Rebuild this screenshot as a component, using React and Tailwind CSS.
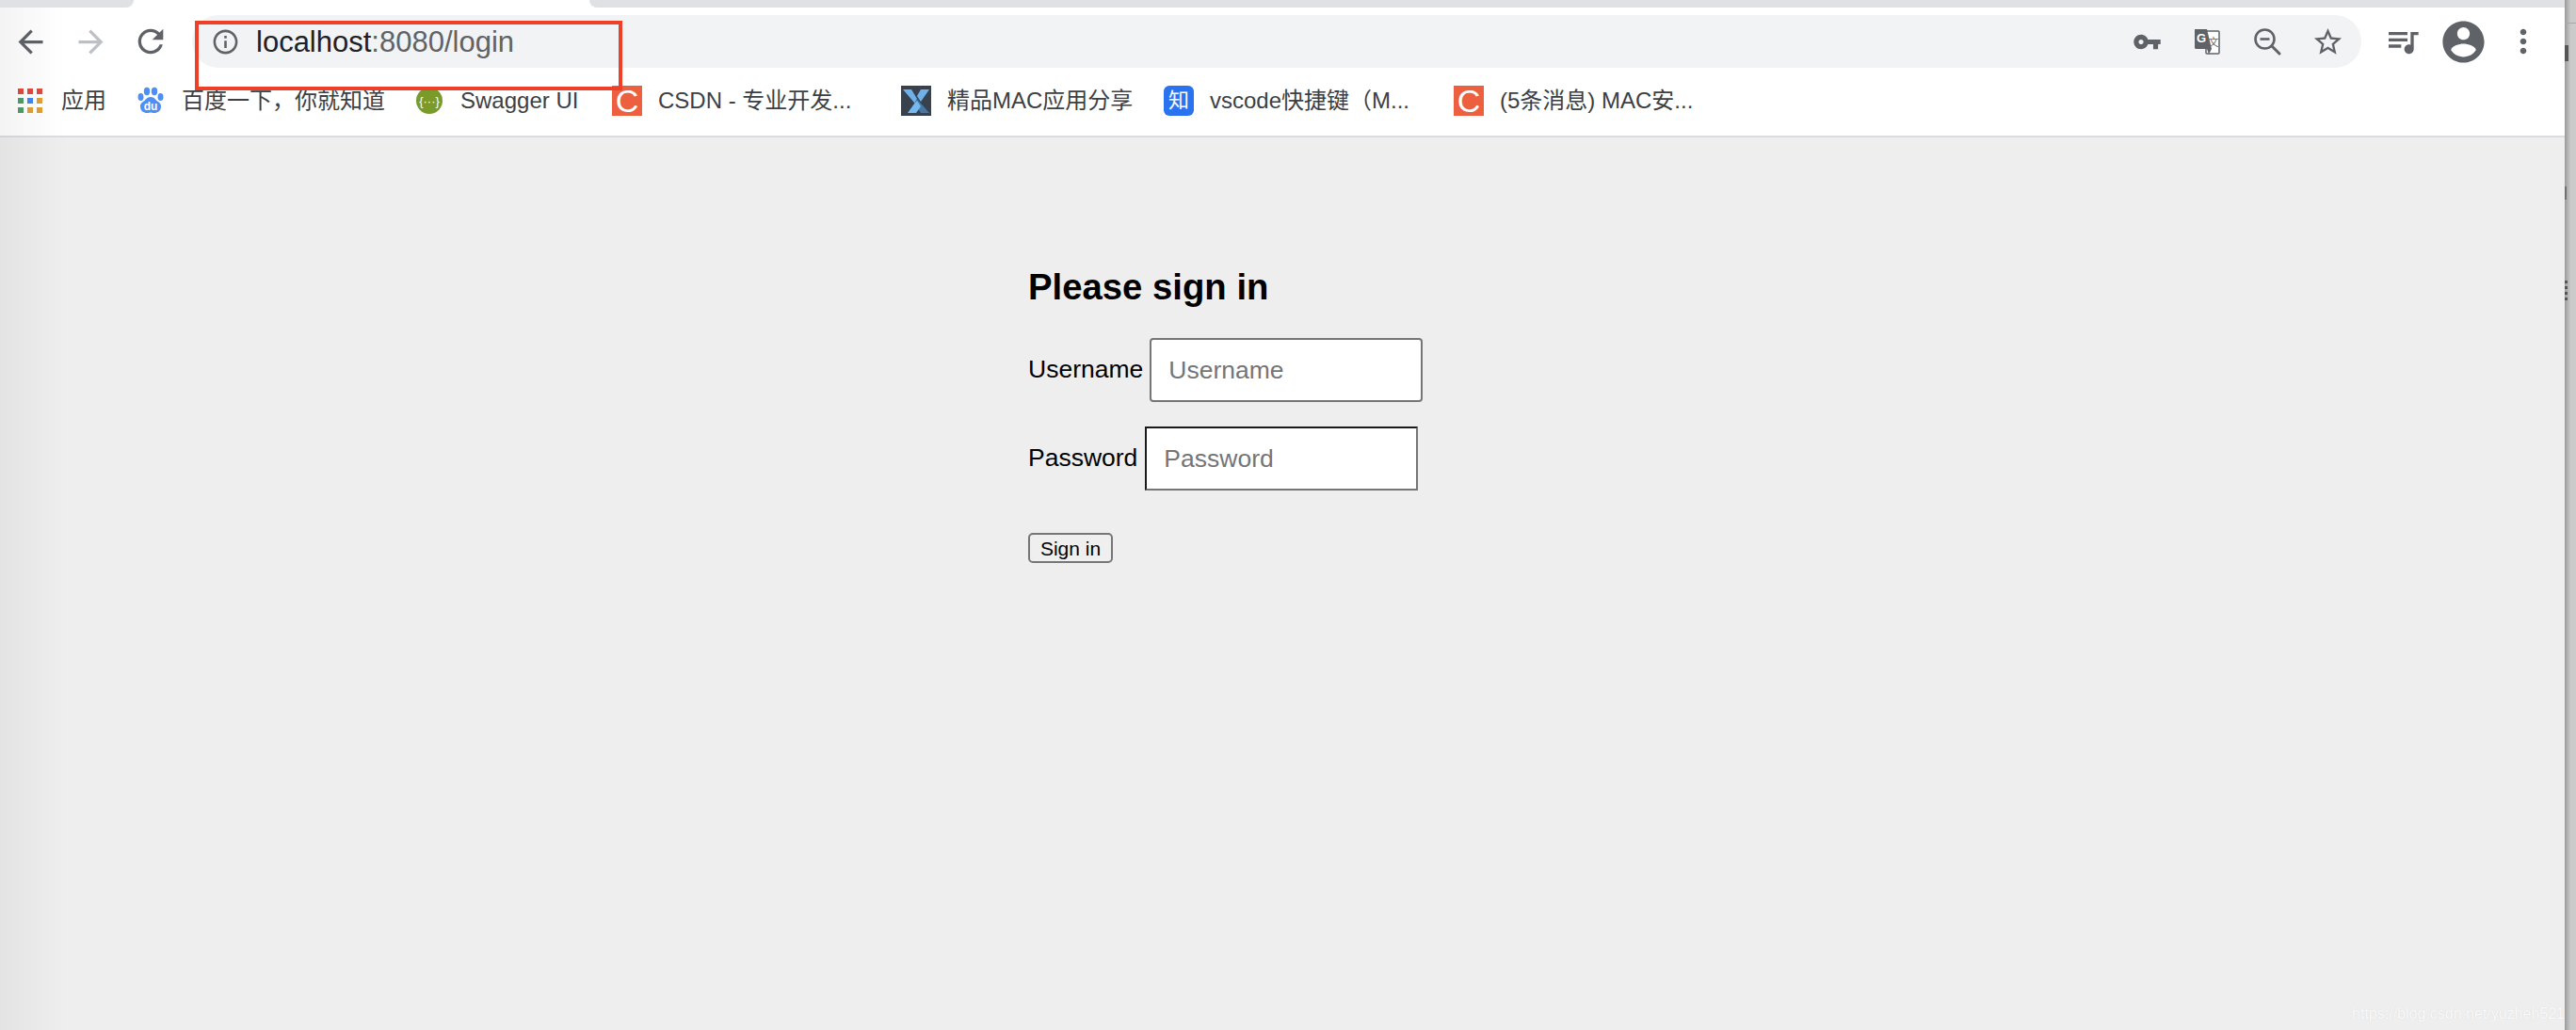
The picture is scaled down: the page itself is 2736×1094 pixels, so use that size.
import React from 'react';

const uiFont = { fontFamily: '"Liberation Sans", "Noto Sans CJK SC", sans-serif' };

function Mat({ d, size, className }) {
  return (
    <svg width={size} height={size} viewBox="0 0 24 24" fill="currentColor" className={className}>
      <path d={d} />
    </svg>
  );
}

const paths = {
  back: 'M20 11H7.83l5.59-5.59L12 4l-8 8 8 8 1.41-1.41L7.83 13H20v-2z',
  forward: 'M12 4l-1.41 1.41L16.17 11H4v2h12.17l-5.58 5.59L12 20l8-8z',
  reload: 'M17.65 6.35C16.2 4.9 14.21 4 12 4c-4.42 0-7.99 3.58-7.99 8s3.57 8 7.99 8c3.73 0 6.84-2.55 7.73-6h-2.08c-.82 2.33-3.04 4-5.65 4-3.31 0-6-2.69-6-6s2.69-6 6-6c1.66 0 3.14.69 4.22 1.78L13 11h7V4l-2.35 2.35z',
  info: 'M11 7h2v2h-2zm0 4h2v6h-2zm1-9C6.48 2 2 6.48 2 12s4.48 10 10 10 10-4.48 10-10S17.52 2 12 2zm0 18c-4.41 0-8-3.59-8-8s3.59-8 8-8 8 3.59 8 8-3.59 8-8 8z',
  key: 'M12.65 10C11.83 7.67 9.61 6 7 6c-3.31 0-6 2.69-6 6s2.69 6 6 6c2.61 0 4.83-1.67 5.65-4H17v4h4v-4h2v-4H12.65zM7 14c-1.1 0-2-.9-2-2s.9-2 2-2 2 .9 2 2-.9 2-2 2z',
  star: 'M22 9.24l-7.19-.62L12 2 9.19 8.63 2 9.24l5.46 4.73L5.82 21 12 17.27 18.18 21l-1.63-7.03L22 9.24zM12 15.4l-3.76 2.27 1-4.28-3.32-2.88 4.38-.38L12 6.1l1.71 4.04 4.38.38-3.32 2.88 1 4.28L12 15.4z',
  queue: 'M15 6H3v2h12V6zm0 4H3v2h12v-2zM3 16h8v-2H3v2zM17 6v8.18c-.31-.11-.65-.18-1-.18-1.66 0-3 1.34-3 3s1.34 3 3 3 3-1.34 3-3V8h3V6h-5z',
  account: 'M12 2C6.48 2 2 6.48 2 12s4.48 10 10 10 10-4.48 10-10S17.52 2 12 2zm0 3c1.66 0 3 1.34 3 3s-1.34 3-3 3-3-1.34-3-3 1.34-3 3-3zm0 14.2c-2.5 0-4.71-1.28-6-3.22.03-1.99 4-3.08 6-3.08 1.99 0 5.97 1.09 6 3.08-1.29 1.94-3.5 3.22-6 3.22z',
  more: 'M12 8c1.1 0 2-.9 2-2s-.9-2-2-2-2 .9-2 2 .9 2 2 2zm0 2c-1.1 0-2 .9-2 2s.9 2 2 2 2-.9 2-2-.9-2-2-2zm0 6c-1.1 0-2 .9-2 2s.9 2 2 2 2-.9 2-2-.9-2-2-2z',
};

function AppsIcon() {
  const colors = ['#e04a3f', '#e04a3f', '#e04a3f', '#4f9d69', '#4285f4', '#e2a031', '#4f9d69', '#e2a031', '#e2a031'];
  return (
    <svg width="32" height="32" viewBox="0 0 32 32">
      {colors.map((c, i) => (
        <rect key={i} x={3 + (i % 3) * 10} y={3 + Math.floor(i / 3) * 10} width="6" height="6" fill={c} />
      ))}
    </svg>
  );
}

function BaiduIcon() {
  return (
    <svg width="32" height="32" viewBox="0 0 32 32">
      <g fill="#4e8ef7">
        <ellipse cx="5.5" cy="12" rx="3" ry="4" />
        <ellipse cx="12" cy="6" rx="3.2" ry="4.2" />
        <ellipse cx="20" cy="6" rx="3.2" ry="4.2" />
        <ellipse cx="26.5" cy="12" rx="3" ry="4" />
        <path d="M16 12c4 0 5 3 8 5 3 2 3 4 3 5 0 5-4 7-7 7-2 0-3-.5-4-.5s-2 .5-4 .5c-3 0-7-2-7-7 0-1 0-3 3-5 3-2 4-5 8-5z" />
      </g>
      <text x="16" y="26" textAnchor="middle" fontSize="12" fontWeight="700" fill="#fff" style={uiFont}>du</text>
    </svg>
  );
}

function SwaggerIcon() {
  return (
    <svg width="32" height="32" viewBox="0 0 32 32">
      <circle cx="16" cy="16" r="14" fill="#7a9a2a" />
      <text x="16" y="20.5" textAnchor="middle" fontSize="13" fill="#fff" style={uiFont}>{'{···}'}</text>
    </svg>
  );
}

function CsdnIcon() {
  return (
    <div className="w-8 h-8 bg-[#ec6040] flex items-center justify-center text-white text-[34px] leading-none">C</div>
  );
}

function XIcon() {
  return (
    <svg width="32" height="32" viewBox="0 0 32 32">
      <rect width="32" height="32" fill="#38424f" />
      <path d="M2 4h9l6 10-2.5 4.5z" fill="#6fb2ea" />
      <path d="M30 4h-9l-4 7 4 6z" fill="#6fb2ea" />
      <path d="M14.5 18.5 17 14l13 15h-9z" fill="#4579a3" />
      <path d="M14.5 18.5 7 29h9l5-7-4-6z" fill="#74b9f0" />
    </svg>
  );
}

function ZhiIcon() {
  return (
    <div className="w-8 h-8 rounded-md bg-[#2a73f0] flex items-center justify-center text-white text-[22px] leading-none">知</div>
  );
}

function TranslateIcon() {
  return (
    <svg width="32" height="32" viewBox="0 0 32 32">
      <rect x="15" y="5" width="14" height="24" rx="1" fill="#fff" stroke="#5f6368" strokeWidth="1.5" />
      <path d="M3 3h13l5 21H4.5A1.5 1.5 0 0 1 3 22.5z" fill="#5f6368" />
      <path d="M16 24h5l-3 5.5z" fill="#5f6368" />
      <text x="10" y="17" textAnchor="middle" fontSize="13" fontWeight="700" fill="#fff" style={uiFont}>G</text>
      <text x="23" y="21" textAnchor="middle" fontSize="11" fill="#5f6368" style={uiFont}>文</text>
    </svg>
  );
}

function ZoomOutIcon() {
  return (
    <svg width="32" height="32" viewBox="0 0 32 32" fill="none" stroke="#5f6368" strokeWidth="2.6">
      <circle cx="13.5" cy="13.5" r="10" />
      <path d="M8.5 13.5h10" />
      <path d="M21 21l8 8" strokeLinecap="round" strokeWidth="3" />
    </svg>
  );
}

const bookmarks = [
  { icon: <AppsIcon />, label: '应用', width: 'w-[128px]' },
  { icon: <BaiduIcon />, label: '百度一下，你就知道', width: 'w-[296px]' },
  { icon: <SwaggerIcon />, label: 'Swagger UI', width: 'w-[210px]' },
  { icon: <CsdnIcon />, label: 'CSDN - 专业开发...', width: 'w-[307px]' },
  { icon: <XIcon />, label: '精品MAC应用分享', width: 'w-[279px]' },
  { icon: <ZhiIcon />, label: 'vscode快捷键（M...', width: 'w-[308px]' },
  { icon: <CsdnIcon />, label: '(5条消息) MAC安...', width: 'w-[300px]' },
];

function Toolbar() {
  return (
    <div className="flex h-[72px] py-2 pr-3 items-stretch text-[#5f6368]">
      <div className="w-16 flex items-center justify-center"><Mat d={paths.back} size={39} /></div>
      <div className="w-16 flex items-center justify-center text-[#bdc1c6]"><Mat d={paths.forward} size={39} /></div>
      <div className="w-16 flex items-center justify-center"><Mat d={paths.reload} size={40} /></div>
      <div className="ml-3 flex-1 flex items-center bg-[#f1f3f4] rounded-full pl-[20px] pr-1">
        <Mat d={paths.info} size={31} />
        <span className="ml-[17px] text-[31px] text-[#5f6368] leading-none">
          <span className="text-[#202124]">localhost</span>:8080/login
        </span>
        <div className="ml-auto flex items-center">
          <div className="w-16 flex justify-center"><Mat d={paths.key} size={31} /></div>
          <div className="w-16 flex justify-center"><TranslateIcon /></div>
          <div className="w-16 flex justify-center"><ZoomOutIcon /></div>
          <div className="w-16 flex justify-center"><Mat d={paths.star} size={35} /></div>
        </div>
      </div>
      <div className="ml-3 flex items-center">
        <div className="w-16 flex justify-center"><Mat d={paths.queue} size={40} /></div>
        <div className="w-16 flex justify-center"><Mat d={paths.account} size={53} /></div>
        <div className="w-16 flex justify-center"><Mat d={paths.more} size={40} /></div>
      </div>
    </div>
  );
}

function BookmarkBar() {
  return (
    <div className="flex h-[66px] pb-[10px] items-center border-b-2 border-[#dadce0] text-[24px] text-[#3c4043]">
      {bookmarks.map((b, i) => (
        <div key={i} className={`flex items-center gap-[17px] pl-4 shrink-0 ${b.width}`}>
          <div className="shrink-0">{b.icon}</div>
          <span className="whitespace-nowrap leading-none">{b.label}</span>
        </div>
      ))}
    </div>
  );
}

function LoginForm() {
  return (
    <form className="w-[540px] mx-auto pt-[137px] text-black" onSubmit={e => e.preventDefault()}>
      <h2 className="text-[38.3px] leading-[44px] font-bold">Please sign in</h2>
      <div className="mt-[32px] flex items-center gap-[7px] text-[26.5px]">
        <label>Username</label>
        <input
          placeholder="Username"
          className="w-[290px] h-[68px] px-[18px] bg-white border-2 border-[#767676] rounded-[4px] outline-none placeholder:text-[#757575]"
        />
      </div>
      <div className="mt-[26px] flex items-center gap-[8px] text-[26.5px]">
        <label>Password</label>
        <input
          type="password"
          placeholder="Password"
          className="w-[290px] h-[68px] px-[18px] bg-white border-2 border-t-[#1a1a1a] border-l-[#1a1a1a] border-r-[#767676] border-b-[#767676] outline-none placeholder:text-[#757575]"
        />
      </div>
      <button className="mt-[45px] block w-[90px] h-[32px] bg-[#efefef] border-2 border-[#767676] rounded-[5px] text-[21px] leading-none">
        Sign in
      </button>
    </form>
  );
}

export default function App() {
  return (
    <div className="relative w-[2736px] h-[1094px] overflow-hidden flex bg-[#eeeeee]" style={uiFont}>
      <div className="flex-1 flex flex-col">
        <div className="bg-white">
          <div className="flex h-2">
            <div className="w-[142px] bg-[#dfe1e5] rounded-br-2xl" />
            <div className="w-[484px]" />
            <div className="flex-1 bg-[#dfe1e5] rounded-bl-2xl" />
          </div>
          <Toolbar />
          <BookmarkBar />
        </div>
        <LoginForm />
      </div>

      {/* scrollbar-ish strip of the window behind */}
      <div className="relative w-3 bg-gradient-to-r from-[#9a9a9a] via-[#c9c9c9] to-[#cccccc]">
        <div className="absolute top-6 left-0 w-full h-px bg-[#a8a8a8]" />
        <div className="absolute top-[48px] left-0 w-[4px] h-[17px] bg-[#555555]" />
        <div className="absolute top-[198px] left-0 w-[2px] h-[14px] bg-[#707070]" />
        <div className="absolute top-[298px] left-0 w-[3px] h-[22px] bg-[repeating-linear-gradient(#555555_0_3px,transparent_3px_6px)]" />
      </div>

      {/* dark fade on the left edge */}
      <div className="absolute left-0 top-2 bottom-0 w-[70px] bg-gradient-to-r from-black/[0.045] to-transparent pointer-events-none" />

      {/* red annotation round the address */}
      <div className="absolute left-[207px] top-[22px] w-[454px] h-[74px] border-[4px] border-[#ee4028] pointer-events-none" />

      <div className="absolute right-3 bottom-[9px] text-[16px] leading-none text-white/90 [text-shadow:0_0_1px_rgba(0,0,0,0.15)]">
        https://blog.csdn.net/yuzheh521
      </div>
    </div>
  );
}
